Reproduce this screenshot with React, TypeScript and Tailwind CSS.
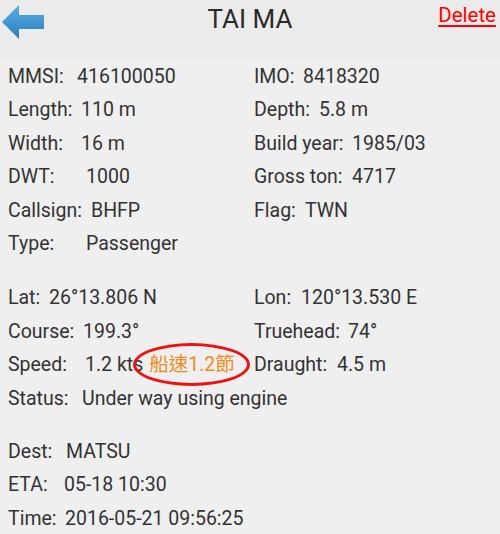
type Field = { label: string; value: string; at: number };

const shipLeft: Field[] = [
  { label: "MMSI:", value: "416100050", at: 69 },
  { label: "Length:", value: "110 m", at: 73 },
  { label: "Width:", value: "16 m", at: 73 },
  { label: "DWT:", value: "1000", at: 78 },
  { label: "Callsign:", value: "BHFP", at: 83 },
  { label: "Type:", value: "Passenger", at: 78 },
];

const shipRight: Field[] = [
  { label: "IMO:", value: "8418320", at: 49 },
  { label: "Depth:", value: "5.8 m", at: 65 },
  { label: "Build year:", value: "1985/03", at: 98 },
  { label: "Gross ton:", value: "4717", at: 98 },
  { label: "Flag:", value: "TWN", at: 51 },
];

const voyage: Field[] = [
  { label: "Dest:", value: "MATSU", at: 58 },
  { label: "ETA:", value: "05-18 10:30", at: 56 },
  { label: "Time:", value: "2016-05-21 09:56:25", at: 57 },
];

const Row = ({ field, children }: { field: Field; children?: React.ReactNode }) => (
  <div className="flex h-[33.4px] items-center whitespace-nowrap">
    <span className="shrink-0" style={{ width: field.at }}>{field.label}</span>
    <span>{field.value}</span>
    {children}
  </div>
);

const BackArrow = () => (
  <svg width="46" height="42" viewBox="0 0 46 42">
    <defs>
      <linearGradient id="arrowFill" x1="0" y1="0" x2="0" y2="1">
        <stop offset="0" stopColor="#5aaee3" />
        <stop offset="1" stopColor="#2a7dbd" />
      </linearGradient>
    </defs>
    <path d="M2 21 L19 4 L19 14 L44 14 L44 28 L19 28 L19 38 Z" fill="url(#arrowFill)" />
  </svg>
);

export default function App() {
  return (
    <div
      className="w-[500px] h-[534px] overflow-hidden bg-[#efefef] text-[#333333] text-[19.5px]"
      style={{ fontFamily: "Roboto, 'Noto Sans CJK TC', sans-serif" }}
    >
      <header className="relative flex h-[60px] items-start bg-[#ebebeb]">
        <div className="pt-[1px]">
          <BackArrow />
        </div>
        <h1 className="absolute left-0 right-0 top-[1px] text-center text-[26px] leading-[36px] text-[#2a2a2a]">
          TAI MA
        </h1>
        <a className="ml-auto mr-[4px] mt-[1px] text-[20.5px] leading-[28px] text-[#ff0000] underline underline-offset-[3px]">
          Delete
        </a>
      </header>

      <section className="grid grid-cols-[246px_1fr] pl-[8px]">
        <div>
          {shipLeft.map((f) => (
            <Row key={f.label} field={f} />
          ))}
        </div>
        <div>
          {shipRight.map((f) => (
            <Row key={f.label} field={f} />
          ))}
        </div>
      </section>

      <section className="mt-[21px] pl-[8px]">
        <div className="grid grid-cols-[246px_1fr]">
          <div>
            <Row field={{ label: "Lat:", value: "26°13.806 N", at: 41 }} />
            <Row field={{ label: "Course:", value: "199.3°", at: 75 }} />
            <Row field={{ label: "Speed:", value: "1.2 kts", at: 77 }}>
              <span className="relative ml-[6px] inline-block leading-[23px] text-[#f08c1c]">
                船速1.2節
                <span className="pointer-events-none absolute left-[-16px] top-[-10px] h-[43px] w-[117px] rounded-[50%] border-[3px] border-[#f01010]" />
              </span>
            </Row>
          </div>
          <div>
            <Row field={{ label: "Lon:", value: "120°13.530 E", at: 47 }} />
            <Row field={{ label: "Truehead:", value: "74°", at: 94 }} />
            <Row field={{ label: "Draught:", value: "4.5 m", at: 83 }} />
          </div>
        </div>
        <Row field={{ label: "Status:", value: "Under way using engine", at: 74 }} />
      </section>

      <section className="mt-[20px] pl-[8px]">
        {voyage.map((f) => (
          <Row key={f.label} field={f} />
        ))}
      </section>
    </div>
  );
}
